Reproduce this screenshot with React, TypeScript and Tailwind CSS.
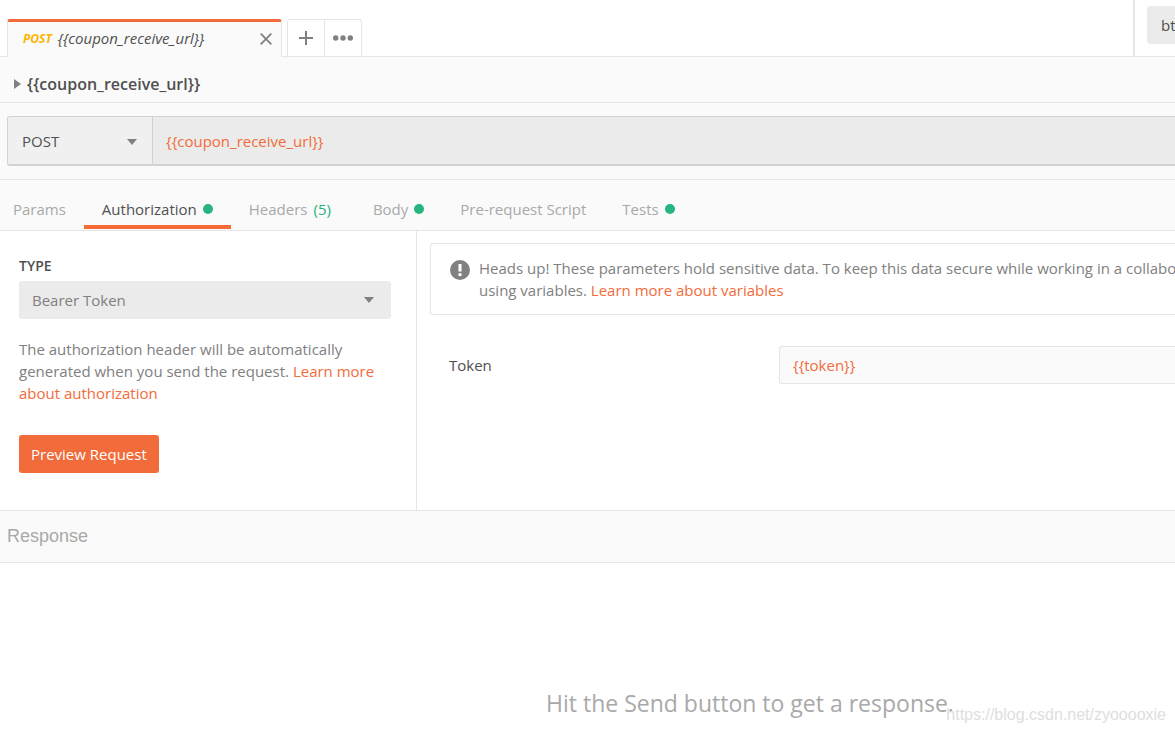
import type { ReactNode } from "react";

function Caret({ className }: { className: string }) {
  return (
    <svg className={className} width="10" height="6" viewBox="0 0 10 6" fill="#808080" aria-hidden="true">
      <path d="M0 0h10L5 6z" />
    </svg>
  );
}

function Dot() {
  return <span className="size-[10px] rounded-full bg-[#26b47f]" />;
}

function RequestTab({ children, active = false }: { children: ReactNode; active?: boolean }) {
  return (
    <button
      type="button"
      role="tab"
      aria-selected={active}
      className={
        active
          ? "flex items-center gap-[6px] border-b-4 border-[#f76b36] px-[18px] pt-2 text-[#505050]"
          : "flex items-center gap-[6px] border-b-4 border-transparent px-[18px] pt-2 text-[#a9a9a9]"
      }
    >
      {children}
    </button>
  );
}

function TopBar() {
  return (
    <header className="flex h-[57px] border-b border-[#e6e6e6] bg-white">
      <div className="flex flex-1 items-end pl-[7px]">
        <div className="-mb-px flex h-[38px] w-[275px] items-center rounded-t-[3px] border-x border-t-[3px] border-x-[#e6e6e6] border-t-[#f26b3a] bg-[#fafafa] pr-[9px] pb-[2px] pl-[15px]">
          <span className="text-[12px] font-bold text-[#ffb400] italic">POST</span>
          <span className="ml-[6px] flex-1 text-[15px] text-[#505050] italic">{"{{coupon_receive_url}}"}</span>
          <button type="button" aria-label="Close tab">
            <svg width="12" height="12" viewBox="0 0 12 12" stroke="#808080" strokeWidth="1.8" aria-hidden="true">
              <path d="M.7.7l10.6 10.6M11.3.7L.7 11.3" />
            </svg>
          </button>
        </div>
        <div className="ml-[5px] flex h-[37px] rounded-t-[3px] border-x border-t border-[#e6e6e6]">
          <button type="button" aria-label="New tab" className="flex w-[37px] items-center justify-center border-r border-[#e6e6e6]">
            <svg width="14" height="14" viewBox="0 0 14 14" stroke="#808080" strokeWidth="2" aria-hidden="true">
              <path d="M7 0v14M0 7h14" />
            </svg>
          </button>
          <button type="button" aria-label="More tabs" className="flex w-9 items-center justify-center">
            <svg width="20" height="6" viewBox="0 0 20 6" fill="#808080" aria-hidden="true">
              <circle cx="2.7" cy="3" r="2.7" />
              <circle cx="10" cy="3" r="2.7" />
              <circle cx="17.3" cy="3" r="2.7" />
            </svg>
          </button>
        </div>
      </div>
      <div className="flex w-[42px] items-start overflow-hidden border-l-2 border-[#e6e6e6] pt-[6px] pl-3">
        <button type="button" className="h-[38px] shrink-0 rounded-l-[3px] bg-[#ebebeb] px-[14px] text-[15px] font-medium text-[#505050]">
          bt
        </button>
      </div>
    </header>
  );
}

function AuthType() {
  return (
    <section className="w-[417px] shrink-0 border-r border-[#e6e6e6] pt-6 pr-[25px] pl-[19px]">
      <label htmlFor="auth-type" className="block text-[14px] leading-[22px] font-semibold text-[#505050]">
        TYPE
      </label>
      <div className="relative mt-1">
        <select
          id="auth-type"
          className="h-[38px] w-full appearance-none rounded-[3px] bg-[#ebebeb] pl-[13px] text-[15px] text-[#808080]"
        >
          <option>Bearer Token</option>
        </select>
        <Caret className="pointer-events-none absolute top-4 right-[17px]" />
      </div>
      <p className="mt-[19px] text-[15px] leading-[22px] text-[#808080]">
        The authorization header will be automatically generated when you send the request.{" "}
        <a href="#authorization" className="text-[#f26b3a]">
          Learn more about authorization
        </a>
      </p>
      <button type="button" className="mt-[31px] h-[38px] rounded-[3px] bg-[#f26b3a] px-3 text-[15px] text-white">
        Preview Request
      </button>
    </section>
  );
}

function TokenPanel() {
  return (
    <section className="min-w-0 flex-1 pt-3 pl-[13px]">
      <div className="flex rounded-l-[3px] border-y border-l border-[#e6e6e6] py-[13px] pl-[19px]">
        <svg className="mt-[3px] shrink-0" width="20" height="20" viewBox="0 0 20 20" aria-hidden="true">
          <circle cx="10" cy="10" r="10" fill="#808080" />
          <path d="M8.5 4h3v7.5h-3zM8.5 13.2h3v2.8h-3z" fill="#fff" />
        </svg>
        <p className="ml-[9px] overflow-hidden text-[15px] leading-[22px] whitespace-nowrap text-[#808080]">
          Heads up! These parameters hold sensitive data. To keep this data secure while working in a collabora
          <br />
          using variables.{" "}
          <a href="#variables" className="text-[#f26b3a]">
            Learn more about variables
          </a>
        </p>
      </div>
      <div className="mt-[31px] flex items-center pl-[19px]">
        <label htmlFor="token" className="w-[330px] shrink-0 text-[15px] text-[#505050]">
          Token
        </label>
        <input
          id="token"
          defaultValue="{{token}}"
          className="h-[38px] min-w-0 flex-1 rounded-l-[3px] border-y border-l border-[#e6e6e6] bg-[#fafafa] pl-[13px] text-[15px] text-[#f26b3a]"
        />
      </div>
    </section>
  );
}

export default function App() {
  return (
    <div className="relative flex min-h-screen flex-col overflow-hidden bg-white font-['Open_Sans','Noto_Sans',sans-serif]">
      <TopBar />
      <div className="flex h-[46px] items-center border-b border-[#e6e6e6] bg-[#fafafa] pl-[14px]">
        <button type="button" className="flex items-center gap-[6px] pt-2 text-[16px] font-semibold text-[#505050]">
          <svg width="7" height="10" viewBox="0 0 7 10" fill="#808080" aria-hidden="true">
            <path d="M0 0l7 5-7 5z" />
          </svg>
          {"{{coupon_receive_url}}"}
        </button>
      </div>
      <div className="border-b border-[#e6e6e6] bg-[#fafafa] pt-[13px] pb-[13px] pl-[7px]">
        <div className="flex h-[50px] rounded-l-[3px] border-t border-b-2 border-l border-[#d2d2d2] bg-[#ebebeb]">
          <div className="relative w-[145px] border-r border-[#d2d2d2]">
            <select
              aria-label="Method"
              className="h-full w-full appearance-none rounded-l-[3px] bg-[#f0f0f0] pt-[2px] pl-[14px] text-[15px] font-medium text-[#505050]"
            >
              <option>POST</option>
            </select>
            <Caret className="pointer-events-none absolute top-[22px] right-[15px]" />
          </div>
          <input
            aria-label="Request URL"
            defaultValue="{{coupon_receive_url}}"
            className="min-w-0 flex-1 pt-[2px] pl-[13px] text-[15px] text-[#f26b3a]"
          />
        </div>
      </div>
      <div role="tablist" className="flex h-[51px] border-b border-[#e6e6e6] bg-[#fafafa] pt-[5px] pb-px text-[15px]">
        <div className="-ml-[5px] flex">
          <RequestTab>Params</RequestTab>
          <RequestTab active>
            Authorization
            <Dot />
          </RequestTab>
          <RequestTab>
            Headers <span className="text-[#26b47f]">(5)</span>
          </RequestTab>
        </div>
        <div className="ml-[6px] flex">
          <RequestTab>
            Body
            <Dot />
          </RequestTab>
          <RequestTab>Pre-request Script</RequestTab>
          <RequestTab>
            Tests
            <Dot />
          </RequestTab>
        </div>
      </div>
      <div className="flex min-h-[279px]">
        <AuthType />
        <TokenPanel />
      </div>
      <h2 className="flex h-[53px] items-center border-y border-[#e6e6e6] bg-[#fafafa] pl-[7px] font-['Liberation_Sans',Arial,sans-serif] text-[18px] text-[#a9a9a9]">
        Response
      </h2>
      <main className="flex flex-1 justify-center pt-[123px] pl-[325px]">
        <p className="text-[23px] leading-[34px] whitespace-nowrap text-[#a9a9a9]">Hit the Send button to get a response.</p>
      </main>
      <span className="absolute right-[9px] bottom-2 font-['Liberation_Sans',Arial,sans-serif] text-[16px] leading-5 text-[#dedede]">
        https://blog.csdn.net/zyooooxie
      </span>
    </div>
  );
}
